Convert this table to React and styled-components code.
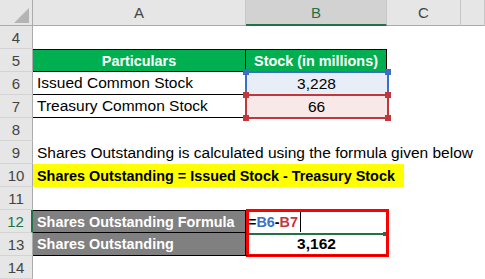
import React from 'react';
import styled, { createGlobalStyle } from 'styled-components';

const font = `"Liberation Sans", Arial, sans-serif`;
const green = '#217346';
const cols = '33px 213px 141px 74px 1fr';

const GlobalStyle = createGlobalStyle`
	body {
		margin: 0;
		background: #fff;
		font-family: ${font};
	}
`;

const Sheet = styled.div`
	width: 485px;
	height: 279px;
	overflow: hidden;
	background: #fff;
`;

const Row = styled.div`
	display: grid;
	grid-template-columns: ${cols};
	height: ${(p) => p.$h || 23}px;
`;

const HeadCell = styled.div`
	box-sizing: border-box;
	display: flex;
	align-items: center;
	justify-content: center;
	background: ${(p) => (p.$active ? '#d2d2d2' : '#e6e6e6')};
	border-right: 1px solid #c6c6c6;
	border-bottom: ${(p) => (p.$active ? `2px solid ${green}` : '1px solid #ababab')};
	color: ${(p) => (p.$active ? green : '#444')};
	font-size: 15px;
`;

const Corner = styled(HeadCell)`
	align-items: flex-end;
	justify-content: flex-end;
	padding: 0 3px 2px 0;
	border-right: 1px solid #ababab;
`;

const RowNum = styled.div`
	box-sizing: border-box;
	display: flex;
	align-items: center;
	justify-content: center;
	background: #e6e6e6;
	border-bottom: 1px solid #d4d4d4;
	border-right: ${(p) => (p.$active ? `2px solid ${green}` : '1px solid #ababab')};
	color: ${(p) => (p.$active ? green : '#444')};
	font-size: 15px;
`;

const Cell = styled.div`
	box-sizing: border-box;
	position: relative;
	display: flex;
	align-items: center;
	justify-content: ${(p) => (p.$align === 'center' ? 'center' : 'flex-start')};
	padding: 0 ${(p) => (p.$align === 'center' ? 0 : 4)}px;
	background: ${(p) => p.$fill || 'transparent'};
	color: ${(p) => p.$color || '#000'};
	font-size: ${(p) => p.$size || (p.$bold ? 14.4 : 15.5)}px;
	font-weight: ${(p) => (p.$bold ? 700 : 400)};
	white-space: nowrap;
	border-top: ${(p) => (p.$bt ? '1px solid #000' : 'none')};
	border-bottom: ${(p) => (p.$bb ? '1px solid #000' : 'none')};
	border-right: ${(p) => (p.$br ? '1px solid #000' : 'none')};
`;

const YellowRow = styled(Row)`
	grid-template-columns: 33px 371px 1fr;
`;

const Highlight = styled.div`
	display: flex;
	align-items: center;
	padding-left: 4px;
	background: #ffff00;
	font-size: 14.4px;
	font-weight: 700;
	white-space: nowrap;
`;

const RefFrame = styled.div`
	position: absolute;
	top: -1px;
	left: -1px;
	right: -2px;
	bottom: -1px;
	border: 2px solid ${(p) => p.$color};
	pointer-events: none;
`;

const Handle = styled.span`
	position: absolute;
	width: 6px;
	height: 6px;
	background: ${(p) => p.$color};
	${(p) => (p.$top ? 'top: -4px;' : 'bottom: -4px;')}
	${(p) => (p.$left ? 'left: -4px;' : 'right: -4px;')}
`;

const Highlighter = styled.div`
	position: absolute;
	top: -1px;
	left: 0;
	width: 143px;
	height: 48px;
	box-sizing: border-box;
	border: 3px solid #ff0000;
`;

const ActiveLine = styled.div`
	position: absolute;
	left: 3px;
	right: 2px;
	bottom: -2px;
	height: 2px;
	background: ${green};

	&::after {
		content: '';
		position: absolute;
		right: -2px;
		top: -1px;
		width: 4px;
		height: 4px;
		background: ${green};
	}
`;

const Ref = styled.span`
	color: ${(p) => p.$color};
`;

const Caret = styled.span`
	display: inline-block;
	width: 1px;
	height: 21px;
	margin-left: 2px;
	background: #000;
`;

const Formula = styled.span`
	display: flex;
	align-items: center;
	margin-left: -2px;
`;

const RefCell = ({ color, fill, children }) => (
	<Cell $align="center" $fill={fill}>
		{children}
		<RefFrame $color={color}>
			<Handle $color={color} $top $left />
			<Handle $color={color} $top />
			<Handle $color={color} $left />
			<Handle $color={color} />
		</RefFrame>
	</Cell>
);

const Blank = ({ n }) => (
	<Row>
		<RowNum>{n}</RowNum>
		<Cell />
		<Cell />
		<Cell />
		<Cell />
	</Row>
);

export default function App() {
	return (
		<Sheet>
			<GlobalStyle />
			<Row $h={26}>
				<Corner>
					<svg width="15" height="15" viewBox="0 0 15 15">
						<polygon points="15,0 15,15 0,15" fill="#b4b4b4" />
					</svg>
				</Corner>
				<HeadCell>A</HeadCell>
				<HeadCell $active>B</HeadCell>
				<HeadCell>C</HeadCell>
				<HeadCell />
			</Row>
			<Blank n={4} />
			<Row>
				<RowNum>5</RowNum>
				<Cell $align="center" $fill="#00b050" $color="#fff" $bold $bt $bb $br>
					Particulars
				</Cell>
				<Cell $align="center" $fill="#00b050" $color="#fff" $bold $bt $bb $br>
					Stock (in millions)
				</Cell>
				<Cell />
				<Cell />
			</Row>
			<Row>
				<RowNum>6</RowNum>
				<Cell $bb $br>Issued Common Stock</Cell>
				<RefCell color="#3b6fc6" fill="#e8eef8">3,228</RefCell>
				<Cell />
				<Cell />
			</Row>
			<Row>
				<RowNum>7</RowNum>
				<Cell $bb $br>Treasury Common Stock</Cell>
				<RefCell color="#c2373b" fill="#f8e8e8">66</RefCell>
				<Cell />
				<Cell />
			</Row>
			<Blank n={8} />
			<Row>
				<RowNum>9</RowNum>
				<Cell>Shares Outstanding is calculated using the formula given below</Cell>
				<Cell />
				<Cell />
				<Cell />
			</Row>
			<YellowRow>
				<RowNum>10</RowNum>
				<Highlight>Shares Outstanding = Issued Stock - Treasury Stock</Highlight>
				<Cell />
			</YellowRow>
			<Blank n={11} />
			<Row>
				<RowNum $active>12</RowNum>
				<Cell $fill="#808080" $color="#fff" $bold $bt $bb $br>
					Shares Outstanding Formula
				</Cell>
				<Cell $bold>
					<Formula>
						=<Ref $color="#3b6fc6">B6</Ref>-<Ref $color="#c2373b">B7</Ref>
						<Caret />
					</Formula>
					<ActiveLine />
					<Highlighter />
				</Cell>
				<Cell />
				<Cell />
			</Row>
			<Row>
				<RowNum>13</RowNum>
				<Cell $fill="#808080" $color="#fff" $bold $bb $br>
					Shares Outstanding
				</Cell>
				<Cell $align="center" $bold $size={15.5} $bb>
					3,162
				</Cell>
				<Cell />
				<Cell />
			</Row>
			<Blank n={14} />
		</Sheet>
	);
}
